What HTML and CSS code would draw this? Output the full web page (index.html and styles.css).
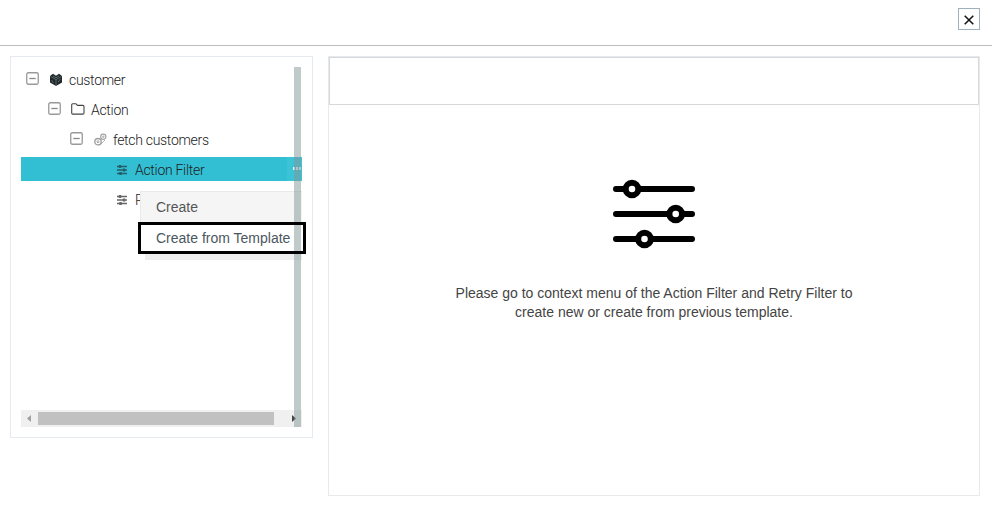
FILE: index.html
```html
<!DOCTYPE html>
<html lang="en">
<head>
<meta charset="utf-8">
<title>Filters</title>
<link rel="stylesheet" href="styles.css">
</head>
<body>
<svg class="defs" width="0" height="0" aria-hidden="true">
  <symbol id="minus-box" viewBox="0 0 13 13"><rect x=".75" y=".75" width="11.5" height="11.5" rx="1.5" fill="none" stroke="#999" stroke-width="1.3"/><path d="M3.3 6.5h6.4" stroke="#888" stroke-width="1.3"/></symbol>
  <symbol id="sliders" viewBox="0 0 10 10"><path d="M0 1.5h10M0 5h10M0 8.5h10" stroke="currentColor" stroke-width="1.5"/><path d="M3 0v3M7 3.5v3M3.5 7v3" stroke="currentColor" stroke-width="2.4"/></symbol>
</svg>
<header class="topbar">
  <button class="close" aria-label="Close"><svg width="10" height="10" viewBox="0 0 10 10"><path d="M.7.7l8.6 8.6M9.3.7L.7 9.3" stroke="#111" stroke-width="1.5"/></svg></button>
</header>
<main class="content">
  <aside class="tree-panel">
    <div class="viewport">
      <div class="row level-0">
        <svg class="toggle"><use href="#minus-box"/></svg>
        <svg class="cube" viewBox="0 0 12 13"><path d="M0 3L3 .7 6 2.8 9 .7 12 3v6.5L6 13 0 9.500z" fill="#20282b"/><path d="M.5 3.500L6 6.500l5.500-3M6 6.500V13M3 3l3 1.700L9 3M1.500 7l2 3M8 9l2.500-3" fill="none" stroke="#829094" stroke-width=".6"/></svg>
        <span>customer</span>
      </div>
      <div class="row level-1">
        <svg class="toggle"><use href="#minus-box"/></svg>
        <svg class="folder" viewBox="0 0 14 12"><path d="M.7 10V1.700Q.7.700 1.700.700h3.200l1.500 1.700h5.500q1.100 0 1.100 1.100V10q0 1.100-1.100 1.100H1.700Q.7 11.100.7 10z" fill="none" stroke="#444" stroke-width="1.100"/></svg>
        <span>Action</span>
      </div>
      <div class="row level-2">
        <svg class="toggle"><use href="#minus-box"/></svg>
        <svg class="gears" viewBox="0 0 13 13"><g fill="none" stroke="#a2a2a2"><circle cx="4" cy="8.700" r="3.200" stroke-width="1.400"/><circle cx="4" cy="8.700" r="1"/><circle cx="9.300" cy="3.700" r="2.600" stroke-width="1.200"/><circle cx="9.300" cy="3.700" r=".7"/><path d="M7 11l4-4" stroke-width=".8"/></g></svg>
        <span>fetch customers</span>
      </div>
      <div class="row level-3 selected">
        <svg class="filter"><use href="#sliders"/></svg>
        <span>Action Filter</span>
        <span class="more"><i></i><i></i><i></i></span>
      </div>
      <div class="row level-3">
        <svg class="filter"><use href="#sliders"/></svg>
        <span class="covered">R</span>
      </div>
      <div class="hscroll">
        <svg class="arrow" viewBox="0 0 4 7"><path d="M4 0v7L0 3.500z" fill="#a0a0a0"/></svg>
        <div class="thumb"></div>
        <svg class="arrow right" viewBox="0 0 4 7"><path d="M0 0v7l4-3.500z" fill="#444"/></svg>
      </div>
      <div class="menu">
        <div class="menu-item">Create</div>
        <div class="menu-foot"></div>
      </div>
      <div class="menu-focus">Create from Template</div>
      <div class="vscroll"></div>
      <div class="focus-ring"></div>
    </div>
  </aside>
  <section class="detail">
    <div class="detail-bar"></div>
    <div class="empty">
      <svg class="hero" width="82" height="70" viewBox="0 0 82 70"><path d="M3 10h76M3 35h76M3 60h76" stroke="#000" stroke-width="6" stroke-linecap="round"/><g fill="#fff" stroke="#000" stroke-width="6"><circle cx="19" cy="10" r="6.300"/><circle cx="62.700" cy="35" r="6.300"/><circle cx="31.500" cy="60" r="6.300"/></g></svg>
      <p>Please go to context menu of the Action Filter and Retry Filter to<br>create new or create from previous template.</p>
    </div>
  </section>
</main>
</body>
</html>
```
FILE: styles.css
```css
* { box-sizing: border-box; }
body { margin: 0; background: #fff; font-family: "Liberation Sans", Arial, sans-serif; font-size: 14px; color: #444; }
svg { display: block; flex: none; }
.defs { position: absolute; }
.topbar { height: 46px; border-bottom: 1px solid #bdbdbd; display: flex; justify-content: flex-end; padding: 8px 12px 0 0; }
.close { width: 22px; height: 22px; padding: 1px 0 0 0; border: 1px solid #9fb0bd; background: #fff; display: flex; align-items: center; justify-content: center; }
.content { display: flex; align-items: flex-start; gap: 15px; padding: 10px 0 0 10px; }
.tree-panel { width: 303px; height: 382px; border: 1px solid #e4eaef; padding: 10px; }
.viewport { position: relative; height: 360px; display: flex; flex-direction: column; gap: 6px; }
.row { height: 24px; display: flex; align-items: center; font: 300 14px/24px Roboto, sans-serif; letter-spacing: -.3px; color: #222; white-space: nowrap; }
.row > span { padding-top: 2px; }
.level-0 { padding-left: 5px; }
.level-1 { padding-left: 27px; }
.level-2 { padding-left: 49px; }
.level-3 { padding-left: 96px; }
.toggle { width: 13px; height: 13px; margin-top: -1px; }
.cube { width: 12px; height: 13px; margin: 0 7px 0 11px; }
.folder { width: 14px; height: 12px; margin: -1px 6px 0 10px; }
.gears { width: 13px; height: 13px; margin: 1px 6px 0 11px; }
.filter { width: 10px; height: 10px; margin: 1px 8px 0 0; color: #666; }
.selected { background: #32bfd4; }
.selected .filter { color: #245e68; }
.row > .covered { width: 5px; overflow: hidden; }
.row > .more { margin-left: auto; width: 15px; height: 24px; padding: 0 0 2px 6px; display: flex; align-items: center; gap: 1px; background: #3cc3d6; }
.more i { width: 2px; height: 3px; background: #e4f6f8; }
.hscroll { margin-top: auto; height: 17px; background: #f0f0f0; display: flex; align-items: center; padding: 0 6px; }
.arrow { width: 4px; height: 7px; }
.thumb { width: 236px; height: 13px; margin-left: 7px; background: #c1c1c1; }
.right { margin-left: auto; }
.menu { position: absolute; left: 119px; top: 124px; width: 162px; height: 69px; }
.menu-item { height: 31px; border: 1px solid #e9e9e9; border-width: 1px 0 0 1px; background: #f5f5f5; padding-left: 15px; line-height: 30px; color: #555; }
.menu-foot { height: 38px; margin-left: 5px; background: #eee; }
.menu-focus { position: absolute; left: 117px; top: 155px; width: 168px; height: 32px; background: #fff; padding-left: 18px; line-height: 32px; color: #4b565e; white-space: nowrap; }
.vscroll { position: absolute; left: 273px; top: 0; width: 7px; height: 360px; background: rgba(130, 150, 150, .5); }
.focus-ring { position: absolute; left: 117px; top: 155px; width: 168px; height: 32px; border: 3px solid #000; }
.detail { width: 652px; height: 440px; border: 1px solid #e4eaef; border-right-color: #e9e9e9; border-bottom-color: #e9e9e9; }
.detail-bar { height: 48px; border: 1px solid #d8d8d8; }
.empty { display: flex; flex-direction: column; align-items: center; padding-top: 74px; }
.empty p { margin: 35px 0 0; line-height: 19px; text-align: center; font-size: 14px; color: #444; white-space: nowrap; }
```
